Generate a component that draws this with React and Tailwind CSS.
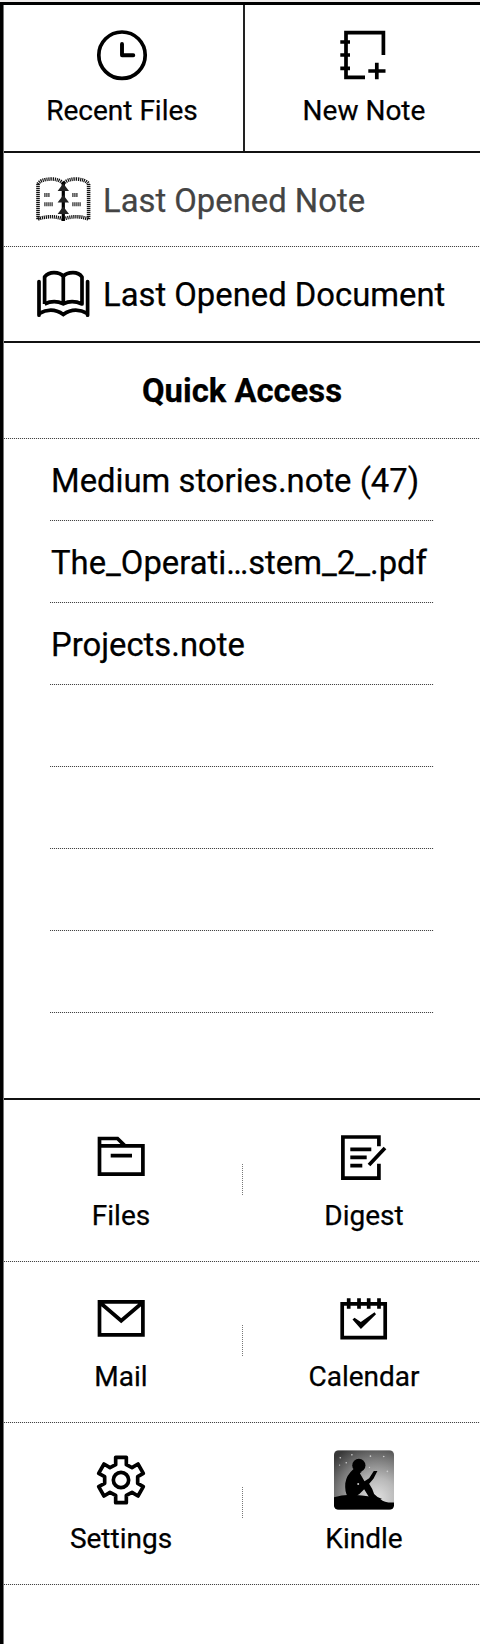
const dotsX = "bg-[repeating-linear-gradient(90deg,#444_0_1px,#eee_1px_2px)]";
const dotsY = "bg-[repeating-linear-gradient(180deg,#777_0_1px,#fff_1px_2px)]";

function Icon({ box, className = "h-[60px] w-[60px]", children }) {
  return (
    <svg viewBox={box} className={`block shrink-0 ${className}`} fill="none" stroke="#000" strokeWidth="3.7">
      {children}
    </svg>
  );
}

const ClockIcon = () => (
  <Icon box="92 25 60 60">
    <circle cx="122" cy="55.2" r="23.2" />
    <path d="M122 44V55.2H133.3" strokeWidth="3.9" strokeLinecap="round" strokeLinejoin="round" />
  </Icon>
);

const NewNoteIcon = () => (
  <Icon box="334 25 60 60">
    <path d="M383.4 55V32.6H346V77.3H365M340.3 42H350M340.3 55H350M340.3 68.3H350M368.3 71H385.5M376.8 62.7V79.2" />
  </Icon>
);

const NoteBookIcon = () => (
  <Icon box="34 170 60 60">
    <g strokeWidth="3.6" strokeDasharray="1.2 0.8" stroke="#111">
      <path d="M38 184V220" />
      <path d="M88.6 184V220" />
      <path d="M38 184Q40 179.5 51 179Q60 179 63.3 184Q67 179 76 179Q86 179.5 88.6 184" />
      <path d="M38 219Q51 214.5 63.3 219Q76 214.5 88.6 219" />
    </g>
    <path d="M63.3 182V221" strokeWidth="3.2" />
    <path
      d="M63.3 183.500L69 191H57.600ZM63.300 195L69 202.500H57.600ZM63.300 206.500L69 214H57.600Z"
      fill="#222"
      stroke="none"
    />
    <path
      d="M44.3 195H50M44.3 204.3H53M72.3 195H78M72.3 204.3H81"
      stroke="#222"
      strokeWidth="4"
      strokeDasharray="1.2 0.8"
    />
  </Icon>
);

const DocumentBookIcon = () => (
  <Icon box="34 264 60 60">
    <path
      d="M63.3 276V303.5M44.6 304V277Q48 272.7 54 272.7Q60.5 272.7 63.3 276.5Q66 272.7 73 272.7Q79 272.7 82 277V304Q72 299.5 63.3 303.8Q54 299.5 44.6 304"
      strokeLinejoin="round"
    />
    <path d="M39 281.500V315.200M87.600 281.500V315.200" strokeLinecap="round" />
    <path d="M39 313.500Q52 306.500 63.300 314.500Q74.500 306.500 87.600 313.500" />
  </Icon>
);

const FolderIcon = () => (
  <Icon box="91 1127 60 60">
    <path d="M99.5 1145.8V1138.5H117.5L125 1145.8M99.5 1145.8H142.9V1174.2H99.5ZM110.7 1155.7H132" />
  </Icon>
);

const DigestIcon = () => (
  <Icon box="334 1127 60 60">
    <path d="M378.9 1146.3V1137H342.9V1178.2H378.9V1163.7M350.3 1149.3H371.3M350.3 1157.3H366.7M350.3 1165.7H362.3M369 1165L385 1148" />
  </Icon>
);

const MailIcon = () => (
  <Icon box="91 1288 60 60">
    <path d="M99.5 1301.9H142.9V1334.9H99.5ZM100.5 1303L121.2 1320.7L142 1303" />
  </Icon>
);

const CalendarIcon = () => (
  <Icon box="334 1288 60 60">
    <path d="M342.2 1303.9H385.2V1337.7H342.2ZM348.7 1298.3V1308.7M359 1298.3V1308.7M368.7 1298.3V1308.7M379 1298.3V1308.7" />
    <path
      d="M352.500 1319.500L354.500 1317.800L360.800 1322L374.500 1312.300L376 1314.300L360.900 1329Z"
      fill="#000"
      stroke="none"
    />
  </Icon>
);

const GearIcon = () => (
  <Icon box="273 91 180 180">
    <g strokeWidth="11">
      <circle cx="363" cy="181" r="23" />
      <path
        strokeLinejoin="round"
        d="M347 113H379V135L396 144L414 133L430 161L413 171V191L430 201L414 229L396 218L379 227V249H347V227L330 218L312 229L296 201L314 191V171L296 161L312 133L330 144L347 135Z"
      />
    </g>
  </Icon>
);

const KindleIcon = () => (
  <Icon box="311 90 181 180">
    <defs>
      <radialGradient id="sky" gradientUnits="userSpaceOnUse" cx="440" cy="235" r="175">
        <stop offset="0" stopColor="#e0e0e0" />
        <stop offset="0.35" stopColor="#b8b8b8" />
        <stop offset="0.7" stopColor="#777" />
        <stop offset="1" stopColor="#383838" />
      </radialGradient>
      <clipPath id="tile">
        <rect x="311" y="90" width="181" height="180" rx="14" />
      </clipPath>
    </defs>
    <g clipPath="url(#tile)" stroke="none">
      <rect x="311" y="90" width="181" height="180" fill="url(#sky)" />
      <g fill="#ccc">
        <circle cx="330" cy="113" r="2.5" />
        <circle cx="365" cy="104" r="2.5" />
        <circle cx="348" cy="128" r="2.5" />
        <circle cx="328" cy="135" r="2" />
        <circle cx="421" cy="108" r="2.5" />
        <circle cx="461" cy="109" r="2.5" />
        <circle cx="418" cy="142" r="2" />
        <circle cx="472" cy="154" r="2.5" />
      </g>
      <g fill="#000">
        <path d="M311 232Q345 220 395 227Q435 231 452 238Q462 249 492 248V270H311Z" />
        <circle cx="386" cy="136" r="20" />
        <path d="M370 147Q348 166 345 190Q343 215 352 230H376Q388 224 402 208L420 237H456Q440 232 432 222Q427 205 417 191L430 176L442 153H431L417 175L403 184L389 160L395 155Z" />
      </g>
      <circle cx="384" cy="192" r="3" fill="#ccc" />
    </g>
  </Icon>
);

function AppCell({ icon, label, className }) {
  return (
    <div className={`flex shrink-0 flex-col items-center ${className}`}>
      {icon}
      <span className="mt-[13px] text-[28px] leading-8">{label}</span>
    </div>
  );
}

function AppRow({ left, right, className }) {
  return (
    <div className={`flex ${className}`}>
      <AppCell {...left} className="w-[234px]" />
      <div className={`ml-1 mt-[37px] h-[31px] w-px shrink-0 ${dotsY}`} />
      <AppCell {...right} className="w-[242px]" />
    </div>
  );
}

const files = ["Medium stories.note (47)", "The_Operati…stem_2_.pdf", "Projects.note", "", "", "", ""];

export default function App() {
  return (
    <div className="h-[1644px] w-[480px] overflow-hidden bg-[#efeded] pt-[2px] font-['Roboto',sans-serif] text-black [-webkit-text-stroke:0.25px]">
      <div className="h-[1642px] border-l-[3px] border-t-[3px] border-black bg-white">
        <div className="h-[1639px] border-l border-[#777]">
          <div className="flex h-[148px] border-b-2 border-[#111]">
            <div className="flex w-[241px] flex-col items-center border-r-2 border-[#222] pr-[3px] pt-5">
              <ClockIcon />
              <span className="mt-[10px] text-[28px] leading-8">Recent Files</span>
            </div>
            <div className="flex flex-1 flex-col items-center pl-[3px] pt-5">
              <NewNoteIcon />
              <span className="mt-[10px] text-[28px] leading-8">New Note</span>
            </div>
          </div>

          <div className="flex h-[93px] pl-[30px] pt-[17px] text-[#444]">
            <NoteBookIcon />
            <span className="pl-[9px] pt-[11px] text-[32.8px] leading-10">Last Opened Note</span>
          </div>
          <div className={`h-px ${dotsX}`} />
          <div className="flex h-[96px] border-b-2 border-[#111] pl-[30px] pt-[17px]">
            <DocumentBookIcon />
            <span className="whitespace-nowrap pl-[9px] pt-[11px] text-[32.8px] leading-10">Last Opened Document</span>
          </div>

          <h2 className="flex h-[95px] items-center justify-center text-[32.8px] font-bold leading-10">
            Quick Access
          </h2>
          <div className={`h-px ${dotsX}`} />

          <ul className="ml-[46px] w-[384px]">
            {files.map((name, i) => (
              <li key={i}>
                <div className="flex h-[81px] items-center whitespace-nowrap pl-px pt-[2px] text-[32.8px] leading-10">
                  {name}
                </div>
                <div className={`h-px ${dotsX}`} />
              </li>
            ))}
          </ul>

          <div className="mt-[85px] h-[2px] bg-[#111]" />
          <AppRow
            className="h-[161px] pt-[27px]"
            left={{ icon: <FolderIcon />, label: "Files" }}
            right={{ icon: <DigestIcon />, label: "Digest" }}
          />
          <div className={`h-px ${dotsX}`} />
          <AppRow
            className="h-[160px] pt-[26px]"
            left={{ icon: <MailIcon />, label: "Mail" }}
            right={{ icon: <CalendarIcon />, label: "Calendar" }}
          />
          <div className={`h-px ${dotsX}`} />
          <AppRow
            className="h-[161px] pt-[27px]"
            left={{ icon: <GearIcon />, label: "Settings" }}
            right={{ icon: <KindleIcon />, label: "Kindle" }}
          />
          <div className={`h-px ${dotsX}`} />
        </div>
      </div>
    </div>
  );
}
